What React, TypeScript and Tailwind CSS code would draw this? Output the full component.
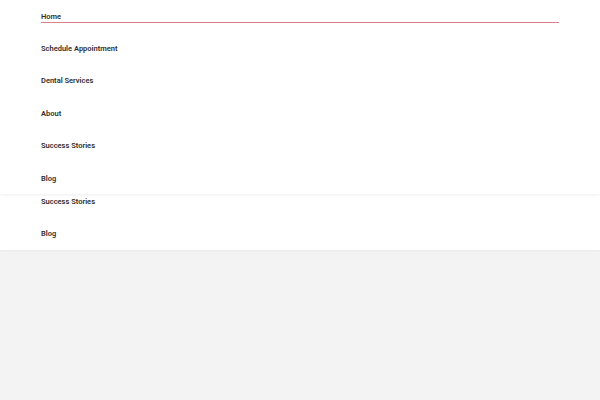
const items = ['Home', 'Schedule Appointment', 'Dental Services', 'About', 'Success Stories', 'Blog'];
const overflowItems = ['Success Stories', 'Blog'];

function NavItem({ label, active }: { label: string; active?: boolean }) {
  return (
    <div className="relative flex h-[32.4px] items-center px-[41px]">
      <span className="text-[7.5px] font-semibold text-[#2e2e2e]">{label}</span>
      {active && <div className="absolute left-[41px] right-[41px] top-[21.5px] h-px bg-[#d8808c]" />}
    </div>
  );
}

export default function App() {
  return (
    <div className="flex h-[400px] w-[600px] flex-col bg-[#f3f3f3] font-['Roboto',sans-serif]">
      <nav className="relative z-10 flex flex-col bg-white shadow-[0_1px_3px_rgba(0,0,0,0.07)]">
        {items.map((item, i) => (
          <NavItem key={item} label={item} active={i === 0} />
        ))}
      </nav>
      <div className="h-[56px] overflow-hidden bg-white shadow-[0_1px_2px_rgba(0,0,0,0.05)]">
        <div className="-mt-[9px] flex flex-col">
          {overflowItems.map((item) => (
            <NavItem key={item} label={item} />
          ))}
        </div>
      </div>
    </div>
  );
}
